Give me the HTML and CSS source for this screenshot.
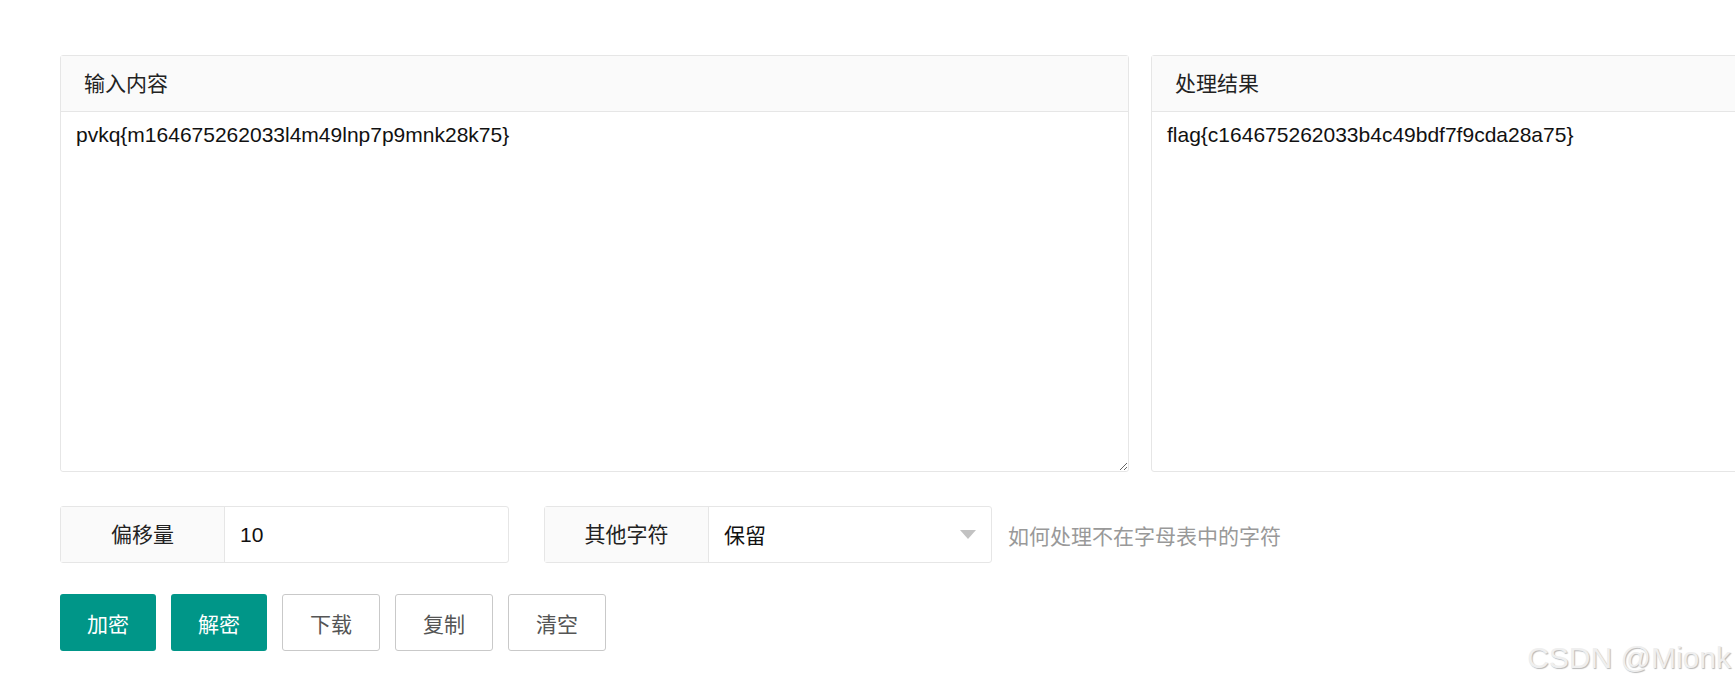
FILE: index.html
```html
<!DOCTYPE html>
<html lang="zh-CN">
<head>
<meta charset="utf-8">
<title>凯撒密码</title>
<link rel="stylesheet" href="styles.css">
</head>
<body>
<div class="page">
  <div class="panels">
    <div class="panel">
      <div class="panel-head">输入内容</div>
      <textarea class="panel-body panel-input" spellcheck="false">pvkq{m164675262033l4m49lnp7p9mnk28k75}</textarea>
    </div>
    <div class="panel">
      <div class="panel-head">处理结果</div>
      <div class="panel-body panel-output">flag{c164675262033b4c49bdf7f9cda28a75}</div>
    </div>
  </div>

  <div class="form-row">
    <div class="field field-offset">
      <div class="field-label">偏移量</div>
      <div class="field-value">10</div>
    </div>
    <div class="field field-other">
      <div class="field-label">其他字符</div>
      <div class="field-value field-select">保留<span class="caret"></span></div>
    </div>
    <div class="help">如何处理不在字母表中的字符</div>
  </div>

  <div class="buttons">
    <button class="btn btn-main">加密</button>
    <button class="btn btn-main">解密</button>
    <button class="btn btn-plain">下载</button>
    <button class="btn btn-plain">复制</button>
    <button class="btn btn-plain">清空</button>
  </div>
</div>
<div class="watermark">CSDN @Mionk</div>
</body>
</html>
```

FILE: styles.css
```css
html, body {
  margin: 0;
  padding: 0;
  overflow: hidden;
  background: #fff;
  width: 1735px;
  height: 688px;
}
body {
  font-family: "Liberation Sans", "Noto Sans CJK SC", sans-serif;
  font-size: 21px;
  color: #333;
  position: relative;
}
.page {
  padding: 55px 0 0 60px;
}
.panels {
  display: flex;
  gap: 22px;
}
.panel {
  flex: 0 0 1069px;
  height: 417px;
  box-sizing: border-box;
  border: 1px solid #e6e6e6;
  border-radius: 3px;
  display: flex;
  flex-direction: column;
}
.panel-head {
  height: 55px;
  line-height: 55px;
  padding: 0 23px;
  background: #fafafa;
  border-bottom: 1px solid #e6e6e6;
  color: #222;
  flex: 0 0 auto;
}
.panel-body {
  flex: 1 1 auto;
  padding: 8px 15px;
  font-family: "Liberation Sans", "Noto Sans CJK SC", sans-serif;
  font-size: 21px;
  line-height: 30px;
  color: #111;
}
.panel-input {
  border: 0;
  margin: 0;
  outline: none;
  resize: vertical;
  background: #fff;
  border-radius: 0 0 3px 3px;
}
.form-row {
  display: flex;
  align-items: center;
  margin-top: 34px;
}
.field {
  display: flex;
  height: 57px;
  box-sizing: border-box;
  border: 1px solid #e6e6e6;
  border-radius: 3px;
}
.field-offset {
  width: 449px;
}
.field-other {
  width: 448px;
  margin-left: 35px;
}
.field-label {
  width: 164px;
  box-sizing: border-box;
  border-right: 1px solid #e6e6e6;
  background: #fafafa;
  text-align: center;
  line-height: 55px;
  color: #222;
}
.field-value {
  flex: 1;
  padding: 0 15px;
  line-height: 55px;
  color: #111;
  position: relative;
}
.field-select {
  line-height: 58px;
}
.caret {
  position: absolute;
  right: 15px;
  top: 23px;
  width: 0;
  height: 0;
  border-top: 9px solid #c2c2c2;
  border-left: 8.5px solid transparent;
  border-right: 8.5px solid transparent;
}
.help {
  margin-left: 16px;
  color: #999;
}
.buttons {
  display: flex;
  gap: 15px;
  margin-top: 31px;
}
.btn {
  height: 57px;
  box-sizing: border-box;
  padding: 0;
  border-radius: 3px;
  font-family: "Liberation Sans", "Noto Sans CJK SC", sans-serif;
  font-size: 21px;
  cursor: pointer;
}
.btn-main {
  width: 96px;
  border: 0;
  background: #009688;
  color: #fff;
}
.btn-plain {
  width: 98px;
  border: 1px solid #c9c9c9;
  background: #fff;
  color: #555;
}
.watermark {
  position: absolute;
  right: 4px;
  top: 643px;
  font-family: "Liberation Sans", sans-serif;
  font-size: 30px;
  line-height: 30px;
  color: #efefef;
  text-shadow: 1px 1px 1px #b8b8b8;
}
```
